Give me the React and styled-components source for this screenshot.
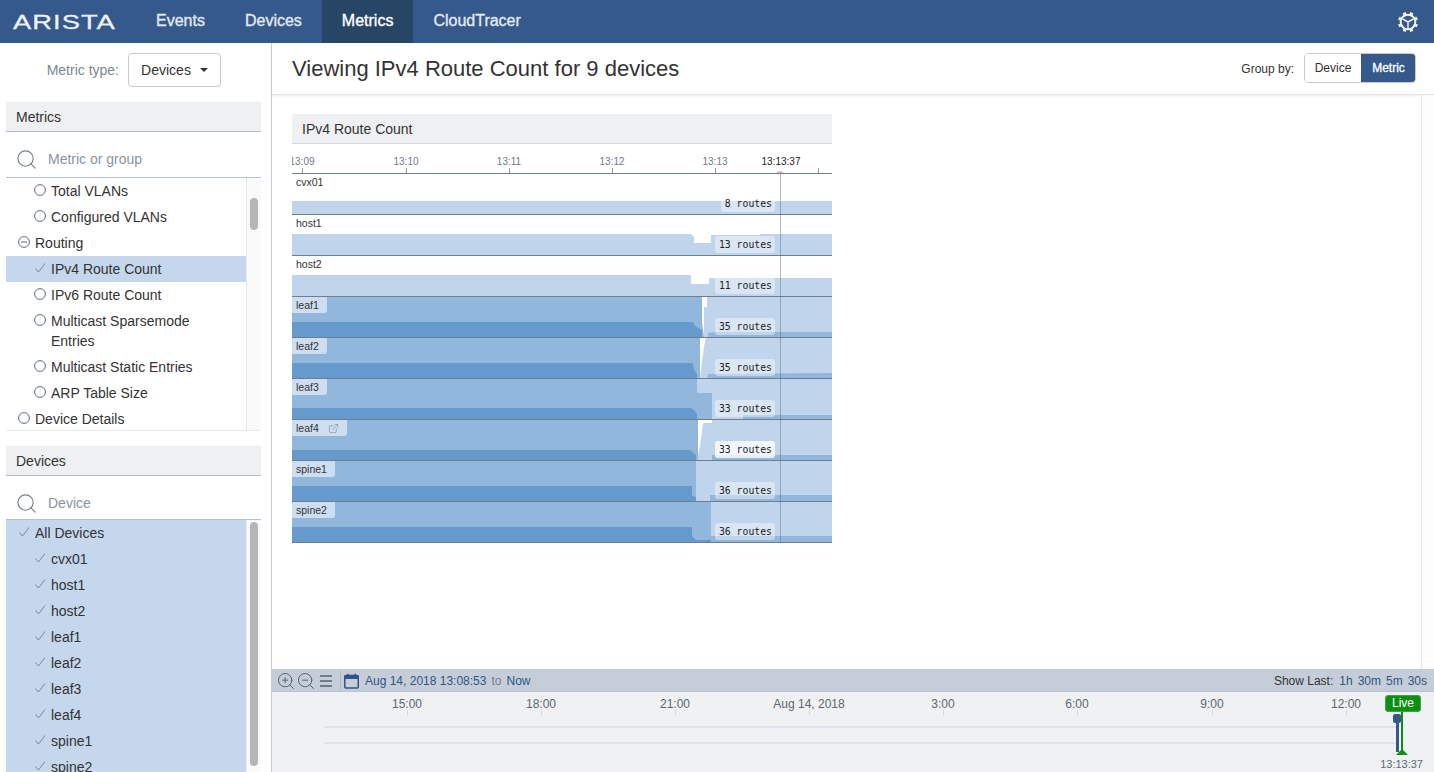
import styled, { createGlobalStyle } from "styled-components";
import { Search, ZoomIn, ZoomOut, ExternalLink } from "lucide-react";

const LIGHT = "#c0d5ec";
const MID = "#92b7dd";
const DARK = "#6699cc";

const GlobalStyle = createGlobalStyle`
    html, body {
        margin: 0;
        height: 100%;
        overflow: hidden;
        background: #fff;
        font-family: "Liberation Sans", Arial, sans-serif;
        color: #333;
    }
    * { box-sizing: border-box; }
`;

const METRICS = [
    { label: "Total VLANs", level: 1, icon: "circle" },
    { label: "Configured VLANs", level: 1, icon: "circle" },
    { label: "Routing", level: 0, icon: "minus" },
    { label: "IPv4 Route Count", level: 1, icon: "check", selected: true },
    { label: "IPv6 Route Count", level: 1, icon: "circle" },
    { label: "Multicast Sparsemode Entries", level: 1, icon: "circle" },
    { label: "Multicast Static Entries", level: 1, icon: "circle" },
    { label: "ARP Table Size", level: 1, icon: "circle" },
    { label: "Device Details", level: 0, icon: "circle" },
];

const DEVICES = [
    { label: "All Devices", level: 0 },
    ...["cvx01", "host1", "host2", "leaf1", "leaf2", "leaf3", "leaf4", "spine1", "spine2"].map((label) => ({ label, level: 1 })),
].map((d) => ({ ...d, icon: "check", selected: true }));

// x is local to the chart (0-540), y is measured from the line above the row (0-41)
const ROWS = [
    { name: "cvx01", routes: 8, shapes: [[LIGHT, "0,28 540,28 540,41 0,41"]] },
    { name: "host1", routes: 13, shapes: [[LIGHT, "0,20 399,20 402,23 402,29 419,29 419,21 468,21 468,20 540,20 540,41 0,41"]] },
    { name: "host2", routes: 11, shapes: [[LIGHT, "0,20 399,20 399,29 417,29 417,23 540,23 540,41 0,41"]] },
    {
        name: "leaf1",
        routes: 35,
        tag: true,
        shapes: [
            [LIGHT, "415,0 540,0 540,41 412,41 412,11 415,11"],
            [MID, "0,0 410,0 410,26 412,41 0,41"],
            [MID, "416,41 416,37 422,36 540,36 540,41"],
            [DARK, "0,26 401,26 403,30 410,34 410,41 0,41"],
        ],
    },
    {
        name: "leaf2",
        routes: 35,
        tag: true,
        shapes: [
            [LIGHT, "414,0 540,0 540,41 408,41 410,24 412,10"],
            [MID, "0,0 408,0 408,41 0,41"],
            [MID, "415,41 416,37 540,36 540,41"],
            [DARK, "0,26 401,26 402,33 405,37 405,41 0,41"],
        ],
    },
    {
        name: "leaf3",
        routes: 33,
        tag: true,
        shapes: [
            [LIGHT, "405,0 540,0 540,41 405,41"],
            [MID, "0,0 405,0 405,15 420,15 420,41 0,41"],
            [MID, "451,41 451,37 540,37 540,41"],
            [DARK, "0,30 398,30 402,32 405,36 405,41 0,41"],
        ],
    },
    {
        name: "leaf4",
        routes: 33,
        tag: true,
        link: true,
        shapes: [
            [LIGHT, "420,0 540,0 540,41 405,41 408,27 411,4 420,4"],
            [MID, "0,0 406,0 406,41 0,41"],
            [MID, "420,41 420,36 540,36 540,41"],
            [DARK, "0,31 398,31 404,36 404,41 0,41"],
        ],
    },
    {
        name: "spine1",
        routes: 36,
        tag: true,
        shapes: [
            [LIGHT, "404,0 540,0 540,41 404,41"],
            [MID, "0,0 404,0 404,41 0,41"],
            [MID, "418,41 418,35 540,35 540,41"],
            [DARK, "0,26 400,26 400,36 404,37 404,41 0,41"],
        ],
    },
    {
        name: "spine2",
        routes: 36,
        tag: true,
        shapes: [
            [LIGHT, "419,0 540,0 540,41 419,41"],
            [MID, "0,0 419,0 419,41 0,41"],
            [MID, "419,41 419,35 540,35 540,41"],
            [DARK, "0,26 400,26 400,35 404,39 419,39 419,41 0,41"],
        ],
    },
];

const AXIS_TICKS = [
    { x: 10, label: "13:09" },
    { x: 114, label: "13:10" },
    { x: 217, label: "13:11" },
    { x: 320, label: "13:12" },
    { x: 423, label: "13:13" },
    { x: 526 },
];

const TIMELINE_TICKS = [
    { x: 135, label: "15:00" },
    { x: 269, label: "18:00" },
    { x: 403, label: "21:00" },
    { x: 537, label: "Aug 14, 2018" },
    { x: 671, label: "3:00" },
    { x: 805, label: "6:00" },
    { x: 940, label: "9:00" },
    { x: 1074, label: "12:00" },
];

function RowIcon({ type }) {
    if (type === "check") {
        return (
            <IconBox viewBox="0 0 12 12">
                <path d="M1.5 6.5 L4.5 10 L11 1.5" fill="none" stroke="#6f7f8f" strokeWidth="0.9" />
            </IconBox>
        );
    }
    return (
        <IconBox viewBox="0 0 12 12">
            <circle cx="6" cy="6" r="5.4" fill="none" stroke="#5f6d7c" strokeWidth="1" />
            {type === "minus" && <path d="M3 6 H9" stroke="#5f6d7c" strokeWidth="1" />}
        </IconBox>
    );
}

function TreeList({ items, thumbTop, thumbHeight }) {
    return (
        <ListWrap>
            <ListBody>
                {items.map((item) => (
                    <TreeRow key={item.label} $level={item.level} $selected={item.selected}>
                        <RowIcon type={item.icon} />
                        <span>{item.label}</span>
                    </TreeRow>
                ))}
            </ListBody>
            <ScrollTrack>
                <ScrollThumb $top={thumbTop} $height={thumbHeight} />
            </ScrollTrack>
        </ListWrap>
    );
}

function GearIcon() {
    const teeth = [0, 45, 90, 135, 180, 225, 270, 315];
    return (
        <svg width="22" height="22" viewBox="0 0 24 24" fill="none" stroke="#f2f5f8">
            <circle cx="12" cy="12" r="8" strokeWidth="2.2" />
            {teeth.map((a) => (
                <path key={a} d="M12 1 V4.5" strokeWidth="3.4" transform={`rotate(${a + 22.5} 12 12)`} />
            ))}
            <path d="M12 12 L12 19 M12 12 L6 8.5 M12 12 L18 8.5" strokeWidth="1.6" />
        </svg>
    );
}

function CalendarIcon() {
    return (
        <svg width="15" height="16" viewBox="0 0 15 16">
            <rect x="0.75" y="2.5" width="13.5" height="12.5" fill="none" stroke="#2f5587" strokeWidth="1.5" rx="1" />
            <rect x="0.75" y="2.5" width="13.5" height="3.5" fill="#2f5587" />
            <rect x="3" y="0.8" width="1.6" height="3" fill="#2f5587" />
            <rect x="10.4" y="0.8" width="1.6" height="3" fill="#2f5587" />
        </svg>
    );
}

function MenuIcon() {
    return (
        <svg width="20" height="20" viewBox="0 0 20 20" stroke="#56626f" strokeWidth="1.3">
            <path d="M4 5 H16 M4 10 H16 M4 15 H16" />
        </svg>
    );
}

function ChartRowItem({ row }) {
    return (
        <ChartRow>
            <RowArea width="540" height="40" viewBox="0 1 540 40">
                {row.shapes.map(([fill, points], i) => (
                    <polygon key={i} fill={fill} points={points} />
                ))}
            </RowArea>
            <DeviceTag $filled={row.tag}>
                {row.name}
                {row.link && (
                    <TagLink>
                        <ExternalLink size={11} strokeWidth={1.2} color="#6f7c89" />
                    </TagLink>
                )}
            </DeviceTag>
            <RouteTag $bright={row.link}>{row.routes} routes</RouteTag>
        </ChartRow>
    );
}

export default function App() {
    return (
        <Page>
            <GlobalStyle />
            <NavBar>
                <Logo>
                    <LogoText>ARISTA</LogoText>
                </Logo>
                <NavItem>Events</NavItem>
                <NavItem>Devices</NavItem>
                <NavItem $active>Metrics</NavItem>
                <NavItem>CloudTracer</NavItem>
                <NavGear>
                    <GearIcon />
                </NavGear>
            </NavBar>
            <Body>
                <Sidebar>
                    <MetricType>
                        <MetricTypeLabel>Metric type:</MetricTypeLabel>
                        <DropButton>
                            Devices
                            <Caret />
                        </DropButton>
                    </MetricType>
                    <PanelHeader>Metrics</PanelHeader>
                    <SearchRow $height={46} $top={9}>
                        <Search size={23} strokeWidth={1.2} color="#71808f" />
                        <span>Metric or group</span>
                    </SearchRow>
                    <MetricsBox>
                        <TreeList items={METRICS} thumbTop={20} thumbHeight={32} />
                    </MetricsBox>
                    <PanelHeader>Devices</PanelHeader>
                    <SearchRow $height={44} $top={11}>
                        <Search size={23} strokeWidth={1.2} color="#71808f" />
                        <span>Device</span>
                    </SearchRow>
                    <DevicesBox>
                        <TreeList items={DEVICES} thumbTop={2} thumbHeight={244} />
                    </DevicesBox>
                </Sidebar>
                <Main>
                    <Header>
                        <Title>Viewing IPv4 Route Count for 9 devices</Title>
                        <GroupLabel>Group by:</GroupLabel>
                        <Toggle>
                            <ToggleButton>Device</ToggleButton>
                            <ToggleButton $active>Metric</ToggleButton>
                        </Toggle>
                    </Header>
                    <Content>
                        <ChartArea>
                            <Chart>
                                <ChartTitle>IPv4 Route Count</ChartTitle>
                                <Axis>
                                    {AXIS_TICKS.map((t) => (
                                        <AxisTick key={t.x} $x={t.x}>
                                            {t.label && <AxisLabel>{t.label}</AxisLabel>}
                                        </AxisTick>
                                    ))}
                                    <CursorLabel>13:13:37</CursorLabel>
                                    <CursorDot />
                                </Axis>
                                {ROWS.map((row) => (
                                    <ChartRowItem key={row.name} row={row} />
                                ))}
                                <CursorLine />
                            </Chart>
                        </ChartArea>
                        <Gutter />
                    </Content>
                    <Timeline>
                        <TimelineBar>
                            <ToolIcons>
                                <ZoomIn size={20} strokeWidth={1.2} color="#56626f" />
                                <ZoomOut size={20} strokeWidth={1.2} color="#56626f" />
                                <MenuIcon />
                            </ToolIcons>
                            <DateRange>
                                <CalendarIcon />
                                <DateText>Aug 14, 2018 13:08:53</DateText>
                                <DateTo>to</DateTo>
                                <DateText>Now</DateText>
                            </DateRange>
                            <ShowLast>
                                Show Last:
                                <RangeLink>1h</RangeLink>
                                <RangeLink>30m</RangeLink>
                                <RangeLink>5m</RangeLink>
                                <RangeLink>30s</RangeLink>
                            </ShowLast>
                        </TimelineBar>
                        <TimelineBody>
                            {TIMELINE_TICKS.map((t) => (
                                <TimelineTick key={t.x} $x={t.x}>
                                    <span>{t.label}</span>
                                </TimelineTick>
                            ))}
                            <TrackLine />
                            <TrackLine />
                            <LiveBadge>Live</LiveBadge>
                            <LiveStem />
                            <LiveFoot />
                            <Handle />
                            <HandleBar />
                            <NowLabel>13:13:37</NowLabel>
                        </TimelineBody>
                    </Timeline>
                </Main>
            </Body>
        </Page>
    );
}

const Page = styled.div`
    display: flex;
    flex-direction: column;
    height: 100vh;
    overflow: hidden;
`;

const NavBar = styled.nav`
    display: flex;
    align-items: stretch;
    height: 43px;
    flex-shrink: 0;
    background: #34598a;
`;

const Logo = styled.div`
    width: 136px;
    padding-left: 13px;
    line-height: 43px;
`;

const LogoText = styled.span`
    display: inline-block;
    font-size: 21px;
    letter-spacing: 0.8px;
    color: #eef2f6;
    -webkit-text-stroke: 0.3px #eef2f6;
    transform: scaleX(1.3);
    transform-origin: left center;
`;

const NavItem = styled.div`
    display: flex;
    align-items: center;
    padding: 0 20px 2px;
    font-size: 16px;
    color: ${(p) => (p.$active ? "#ffffff" : "#e3e9f0")};
    background: ${(p) => (p.$active ? "#274565" : "transparent")};
    -webkit-text-stroke: 0.35px currentColor;
`;

const NavGear = styled.div`
    display: flex;
    align-items: center;
    margin-left: auto;
    padding-right: 15px;
`;

const Body = styled.div`
    display: flex;
    flex: 1;
    min-height: 0;
`;

const Sidebar = styled.aside`
    display: flex;
    flex-direction: column;
    width: 272px;
    flex-shrink: 0;
    padding: 0 10px 0 6px;
    border-right: 1px solid #c6cdd4;
    overflow: hidden;
`;

const MetricType = styled.div`
    display: flex;
    align-items: center;
    justify-content: flex-end;
    gap: 9px;
    height: 59px;
    padding: 1px 40px 7px 0;
    flex-shrink: 0;
`;

const MetricTypeLabel = styled.span`
    font-size: 14px;
    color: #7b8794;
`;

const DropButton = styled.div`
    display: flex;
    align-items: center;
    justify-content: center;
    gap: 9px;
    width: 93px;
    height: 34px;
    border: 1px solid #c9c9c9;
    border-radius: 4px;
    font-size: 14px;
    color: #333;
`;

const Caret = styled.span`
    width: 0;
    height: 0;
    border-left: 4px solid transparent;
    border-right: 4px solid transparent;
    border-top: 4px solid #333;
`;

const PanelHeader = styled.div`
    display: flex;
    align-items: center;
    height: 30px;
    padding-left: 10px;
    flex-shrink: 0;
    background: #eff0f2;
    border-bottom: 1px solid #b2bbc5;
    font-size: 14px;
    color: #333;
`;

const SearchRow = styled.div`
    display: flex;
    align-items: center;
    gap: 10px;
    height: ${(p) => p.$height}px;
    padding: ${(p) => p.$top}px 0 0 9px;
    flex-shrink: 0;
    border-bottom: 1px solid #b2c1d0;
    font-size: 14px;
    color: #8a949f;
`;

const MetricsBox = styled.div`
    height: 253px;
    margin-bottom: 15px;
    flex-shrink: 0;
    border-bottom: 1px solid #e9ebee;
    overflow: hidden;
`;

const DevicesBox = styled.div`
    flex: 1;
    min-height: 0;
    overflow: hidden;
`;

const ListWrap = styled.div`
    display: flex;
    height: 100%;
`;

const ListBody = styled.div`
    flex: 1;
    min-width: 0;
    overflow: hidden;
`;

const TreeRow = styled.div`
    display: flex;
    align-items: flex-start;
    gap: 5px;
    padding: 3px 28px 3px ${(p) => (p.$level ? 28 : 12)}px;
    font-size: 14px;
    line-height: 20px;
    color: #333;
    background: ${(p) => (p.$selected ? "#c4d7ec" : "transparent")};
`;

const IconBox = styled.svg`
    width: 12px;
    height: 12px;
    flex-shrink: 0;
    margin-top: 3px;
`;

const ScrollTrack = styled.div`
    width: 15px;
    flex-shrink: 0;
    background: #fafafa;
    border-left: 1px solid #e8e8e8;
`;

const ScrollThumb = styled.div`
    width: 8px;
    margin: ${(p) => p.$top}px 0 0 3px;
    height: ${(p) => p.$height}px;
    border-radius: 4px;
    background: #b5b5b5;
`;

const Main = styled.main`
    display: flex;
    flex-direction: column;
    flex: 1;
    min-width: 0;
`;

const Header = styled.header`
    display: flex;
    align-items: center;
    height: 52px;
    flex-shrink: 0;
    padding: 0 18px 0 20px;
    border-bottom: 1px solid #e4e4e4;
    box-shadow: 0 1px 2px rgba(0, 0, 0, 0.08);
`;

const Title = styled.h1`
    flex: 1;
    margin: 0;
    font-size: 22px;
    font-weight: 400;
    color: #333;
`;

const GroupLabel = styled.span`
    margin-right: 10px;
    font-size: 12px;
    color: #333;
`;

const Toggle = styled.div`
    display: flex;
    height: 30px;
    margin-top: -1px;
    border: 1px solid #c9c9c9;
    border-radius: 4px;
    overflow: hidden;
`;

const ToggleButton = styled.div`
    display: flex;
    align-items: center;
    justify-content: center;
    width: ${(p) => (p.$active ? 55 : 56)}px;
    margin: ${(p) => (p.$active ? "-1px -1px -1px 0" : 0)};
    font-size: 12px;
    color: ${(p) => (p.$active ? "#fff" : "#333")};
    background: ${(p) => (p.$active ? "#34598a" : "#fff")};
    -webkit-text-stroke: ${(p) => (p.$active ? "0.3px #fff" : 0)};
`;

const Content = styled.div`
    display: flex;
    flex: 1;
    min-height: 0;
`;

const ChartArea = styled.div`
    flex: 1;
    padding: 19px 20px;
`;

const Gutter = styled.div`
    width: 13px;
    flex-shrink: 0;
    background: #fcfcfc;
    border-left: 1px solid #e8e8e8;
`;

const Chart = styled.section`
    position: relative;
    width: 540px;
`;

const ChartTitle = styled.div`
    display: flex;
    align-items: center;
    height: 30px;
    padding-left: 10px;
    background: #eff0f2;
    border-bottom: 1px solid #d5d8dc;
    font-size: 14px;
    color: #333;
`;

const Axis = styled.div`
    position: relative;
    height: 30px;
    border-bottom: 1px solid #6f7e8e;
    overflow: hidden;
`;

const AxisTick = styled.div`
    position: absolute;
    left: ${(p) => p.$x}px;
    bottom: 0;
    width: 1px;
    height: 5px;
    background: #8c97a3;
`;

const AxisLabel = styled.span`
    position: absolute;
    bottom: 5px;
    left: 0;
    transform: translateX(-50%);
    font-size: 10px;
    line-height: 12px;
    color: #6f7b88;
`;

const CursorLabel = styled.span`
    position: absolute;
    left: 489px;
    bottom: 5px;
    transform: translateX(-50%);
    font-size: 10px;
    line-height: 12px;
    color: #222;
`;

const CursorDot = styled.span`
    position: absolute;
    left: 484px;
    bottom: -2px;
    width: 8px;
    height: 4px;
    border-radius: 4px 4px 0 0;
    background: #d8b9c4;
`;

const CursorLine = styled.div`
    position: absolute;
    left: 488px;
    top: 60px;
    bottom: 0;
    width: 1px;
    background: rgba(90, 100, 112, 0.45);
`;

const ChartRow = styled.div`
    position: relative;
    height: 41px;
    border-bottom: 1px solid #6f7e8e;
    overflow: hidden;
`;

const RowArea = styled.svg`
    display: block;
`;

const DeviceTag = styled.div`
    position: absolute;
    top: 0;
    left: 0;
    display: flex;
    align-items: center;
    height: 16px;
    padding: 0 8px 0 4px;
    border-radius: 0 0 3px 0;
    background: ${(p) => (p.$filled ? "rgba(255,255,255,0.55)" : "transparent")};
    font-size: 10.5px;
    color: #333;
`;

const TagLink = styled.span`
    display: flex;
    align-items: center;
    height: 12px;
    margin-left: 4px;
    padding-left: 4px;
    border-left: 1px solid #d5dfe9;
`;

const RouteTag = styled.div`
    position: absolute;
    right: 57px;
    top: 21px;
    height: 17px;
    padding: 0 3px 0 4px;
    border-radius: 3px;
    background: ${(p) => (p.$bright ? "rgba(255,255,255,0.8)" : "rgba(255,255,255,0.42)")};
    font-family: "DejaVu Sans Mono", monospace;
    font-size: 9.8px;
    line-height: 17px;
    color: #222;
`;

const Timeline = styled.footer`
    display: flex;
    flex-direction: column;
    height: 103px;
    flex-shrink: 0;
`;

const TimelineBar = styled.div`
    display: flex;
    align-items: center;
    height: 23px;
    flex-shrink: 0;
    padding-top: 1px;
    background: #c5ced8;
    border-bottom: 1px solid #b8c3ce;
    font-size: 12px;
`;

const ToolIcons = styled.div`
    display: flex;
    align-items: center;
    width: 69px;
    height: 100%;
    padding-left: 4px;
    border-right: 1px solid #b2bdc9;
`;

const DateRange = styled.div`
    display: flex;
    align-items: center;
    padding-left: 3px;
    flex: 1;
`;

const DateText = styled.span`
    margin-left: 6px;
    color: #2f5587;
`;

const DateTo = styled.span`
    margin-left: 5px;
    color: #6f7e8e;
    & + span {
        margin-left: 5px;
    }
`;

const ShowLast = styled.div`
    display: flex;
    gap: 5px;
    padding-right: 7px;
    color: #333;
`;

const RangeLink = styled.span`
    color: #2f5587;
    &:first-of-type {
        margin-left: 1px;
    }
`;

const TimelineBody = styled.div`
    position: relative;
    flex: 1;
    padding: 34px 37px 0 52px;
    background: #eff1f3;
`;

const TimelineTick = styled.div`
    position: absolute;
    left: ${(p) => p.$x}px;
    top: 18px;
    width: 1px;
    height: 5px;
    background: #d3d8dd;
    span {
        position: absolute;
        bottom: 4px;
        left: 0;
        transform: translateX(-50%);
        white-space: nowrap;
        font-size: 12px;
        line-height: 14px;
        color: #5c6772;
    }
`;

const TrackLine = styled.div`
    height: 2px;
    margin-bottom: 14px;
    background: #dde3e8;
`;

const LiveBadge = styled.div`
    position: absolute;
    left: 1113px;
    top: 3px;
    width: 36px;
    height: 17px;
    border-radius: 3px;
    background: #0e8f14;
    border: 1px solid #3aa63f;
    font-size: 12px;
    line-height: 15px;
    text-align: center;
    color: #fff;
`;

const LiveStem = styled.div`
    position: absolute;
    left: 1129px;
    top: 20px;
    width: 2px;
    height: 40px;
    background: #0e8f14;
`;

const LiveFoot = styled.div`
    position: absolute;
    left: 1124px;
    top: 57px;
    width: 0;
    height: 0;
    border-left: 6px solid transparent;
    border-right: 6px solid transparent;
    border-bottom: 6px solid #0e8f14;
`;

const Handle = styled.div`
    position: absolute;
    left: 1121px;
    top: 22px;
    width: 8px;
    height: 9px;
    border-radius: 2px;
    background: #34598a;
`;

const HandleBar = styled.div`
    position: absolute;
    left: 1124px;
    top: 30px;
    width: 3px;
    height: 30px;
    background: #34598a;
`;

const NowLabel = styled.span`
    position: absolute;
    right: 11px;
    top: 66px;
    font-size: 11px;
    line-height: 13px;
    color: #5c6772;
`;
